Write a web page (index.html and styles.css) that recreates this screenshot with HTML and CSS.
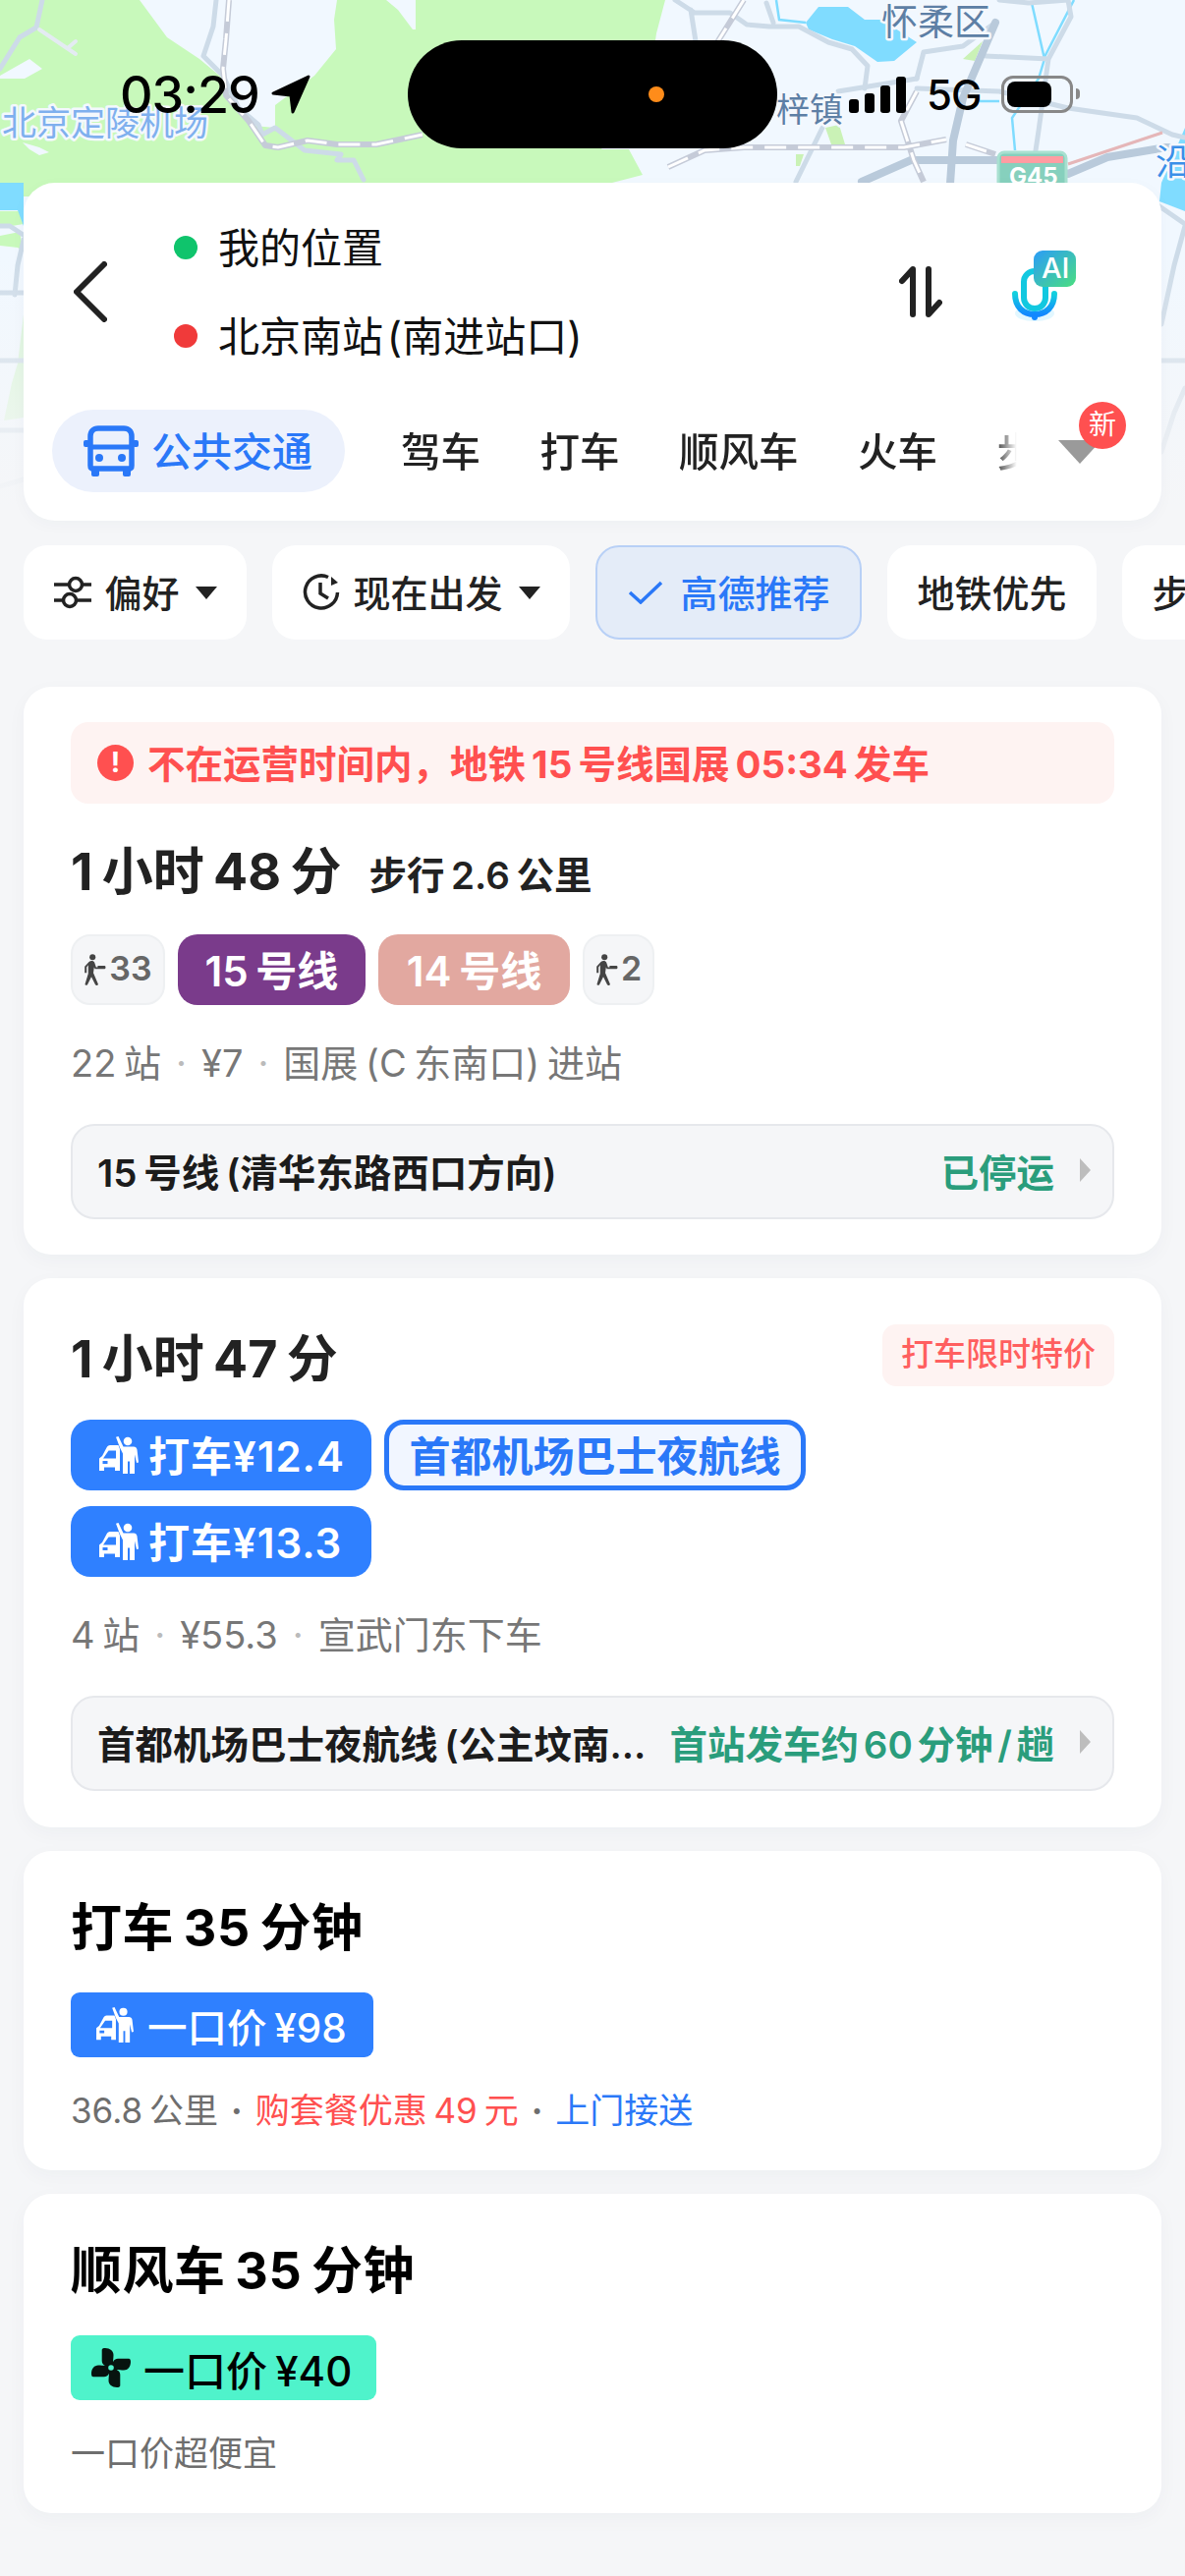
FILE: index.html
```html
<!DOCTYPE html>
<html lang="zh-CN">
<head>
  <meta charset="UTF-8" />
  <meta name="viewport" content="width=device-width, initial-scale=1.0"/>
  <title>路线规划</title>
  <link rel="stylesheet" href="styles.css">
</head>
<body>
  <svg class="icon-defs" width="0" height="0">
    <symbol id="taxi" viewBox="0 0 40 38">
      <circle cx="29" cy="5" r="4.300"/>
      <path d="M17 .8L19.500 0 24.500 10.500H35c2 0 3 1 3.500 3L40 26.500l-2 .5-2-8.500V38H31V25.500H29V38H24V17.500L21 11.500z"/>
      <path fill-rule="evenodd" d="M0 35V22.500L3 20 7.500 11.500C8.200 10 9.500 9 11 9H19.500L21 13V35H16V31.500H5V35zM4 22.500H17V14.500H9.500zM3.500 25v3h5v-3z"/>
    </symbol>
    <symbol id="walker" viewBox="0 0 30 40">
      <circle cx="11.500" cy="4" r="3.800"/>
      <path d="M7 10c2-2 6-2 7 1l2 6h2v-2h9c1.500 0 1.500 4 0 4H14.500l-1-2-1 7 6 14c.5 2-2.500 2.500-3.500 1L10 29 5 39c-1 1.500-3.500.5-3-1l4-13V14l-2 3v7H1.500V16z"/>
    </symbol>
    <symbol id="fan" viewBox="0 0 42 42">
      <path id="fan-blade" d="M21 21C16 20 11.700 18 11.700 14V3C11.700 1.500 13 1 15 1 20 1 23.500 4 23.500 8 23.500 12 22.500 15 23.500 18.500Z"/>
      <use href="#fan-blade" transform="rotate(90 21 21)"/>
      <use href="#fan-blade" transform="rotate(180 21 21)"/>
      <use href="#fan-blade" transform="rotate(270 21 21)"/>
      <circle cx="21" cy="21" r="2.800" fill="#4ff3cb"/>
    </symbol>
  </svg>

  <!-- Carte -->
  <div class="map">
    <svg viewBox="0 0 1206 560" width="1206" height="560">
      <rect width="1206" height="560" fill="#f1f8ff"/>
      <!-- verdure -->
      <path fill="#c8f9bb" d="M0 0H142L170 38 203 60 227 80 240 113 258 128 280 130 280 107 320 77 342 50 340 20 343 0H393L405 10 420 30 423 30 423 0H677L668 34 660 90 612 152H640L654 178 623 186V200H0Z"/>
      <path fill="#c8f9bb" d="M0 215H22L24 228 0 232ZM0 240L20 236 24 256 18 252 0 250Z"/>
      <path fill="#d8f6d6" d="M24 320V425L4 428 12 390 18 370Z"/>
      <path fill="#f1f8ff" d="M177 2l8-1 3 10-2 7-6-4zM0 77L30 60 43 70 25 80H0zM23 145L40 150 50 155 40 158 30 152z"/>
      <path fill="#caf2b6" d="M840 130l14-3 6 20h-14zM810 157h8l-4 12h-4zM980 60l20-18-8 20z"/>
      <!-- eau -->
      <path fill="#80dcff" d="M820 23L833 7H863L880 20H897L933 43 910 62 893 63 870 47 847 40 823 30Z"/>
      <path fill="#80dcff" d="M0 186H24V230L18 214H0ZM1206 130V215L1180 205 1182 186Z"/>
      <g fill="none" stroke="#7fdcff" stroke-width="2.500">
        <path d="M1050 3L1063 60 1057 80 1030 120 1033 153M790 0L793 20 820 23M1063 58L1093 0M997 103H1017"/>
      </g>
      <!-- routes claires -->
      <g fill="none" stroke="#cddbe8" stroke-width="5" stroke-linecap="round" stroke-linejoin="round">
        <path d="M43 0L37 28 20 38 0 70"/>
        <path stroke="#e4ebf2" stroke-width="4" d="M40 30L77 55M77 42L70 48"/>
        <path d="M220 0L217 27 207 57 227 77 243 110 263 127 267 137 280 130 293 140 310 153 347 157 343 163 360 163 370 183"/>
        <path d="M687 0L707 13H743L760 25 783 27H813L843 43 867 50 883 67 880 90M780 3L787 23M703 10L708 42"/>
        <path d="M933 80L940 53 980 47 1013 23M1003 57L1067 60 1090 17 1087 0M1017 0L1047 3 1087 0M1067 60L1057 133 1053 160"/>
        <path d="M853 93L933 80M933 90L1017 93 1087 110 1157 120 1193 137 1206 140M837 130L810 185"/>
        <path d="M0 230H10L25 240 18 270 15 300M0 298H24M0 367H24M0 438H24M0 495L24 488"/>
        <path d="M1182 330L1195 270 1206 230M1182 367H1206M1182 460L1195 420 1206 395M1180 210L1206 228"/>
      </g>
      <!-- voies rapides -->
      <g fill="none" stroke="#b9cadb" stroke-width="8" stroke-linecap="round" stroke-linejoin="round">
        <path d="M1013 23L980 100 970 143 967 187"/>
        <path d="M877 185L927 163H1017L1087 177 1127 160 1187 150 1206 150"/>
      </g>
      <!-- voies ferrees -->
      <g fill="none" stroke="#c5cbd8" stroke-width="6" stroke-linejoin="round">
        <path id="rail-a" d="M233 0L230 40 227 70 230 97 253 123 270 148 283 150 313 143 343 147H383L430 137"/>
        <path id="rail-b" d="M680 170L717 153 757 150H920L963 142M983 147L1013 157M757 0L730 43M933 93L917 123 930 163 940 185"/>
      </g>
      <g fill="none" stroke="#fff" stroke-width="3" stroke-dasharray="22 12">
        <use href="#rail-a"/>
        <use href="#rail-b"/>
      </g>
      <path fill="none" stroke="#e5b6b8" stroke-width="3" d="M1087 167L1183 135"/>
      <g class="map-label-halo">
        <text x="2" y="138" class="map-label-airport">北京定陵机场</text>
        <text x="790" y="124" class="map-label-town">梓镇</text>
        <text x="897" y="36" class="map-label-town map-label-district">怀柔区</text>
        <text x="1176" y="178" class="map-label-river">沿</text>
      </g>
      <rect x="1016" y="155" width="69" height="40" rx="6" fill="#86d0bd" stroke="#a8e0d0" stroke-width="3"/>
      <rect x="1019" y="159" width="63" height="7" fill="#ff9ca2"/>
      <text x="1027" y="188" class="map-label-road">G45</text>
    </svg>
  </div>

  <!-- Barre d'etat -->
  <div class="status-bar">
    <div class="status-time">
      <span>03:29</span>
      <svg width="40" height="40" viewBox="0 0 40 40"><path d="M38 2L2 19 20 21 22 38Z" fill="#000" stroke="#000" stroke-width="3" stroke-linejoin="round"/></svg>
    </div>
    <div class="island"><span class="island-dot"></span></div>
    <div class="status-right">
      <svg width="58" height="37" viewBox="0 0 58 37">
        <rect x="0" y="23" width="10" height="14" rx="3"/>
        <rect x="16" y="17" width="10" height="20" rx="3"/>
        <rect x="32" y="9" width="10" height="28" rx="3"/>
        <rect x="48" y="0" width="10" height="37" rx="3"/>
      </svg>
      <span class="status-net">5G</span>
      <div class="battery"><span class="battery-fill"></span></div>
    </div>
  </div>

  <!-- Panneau itineraire -->
  <div class="panel">
    <div class="route-row">
      <svg class="back-icon" width="34" height="62" viewBox="0 0 34 62"><path d="M31 3L3 31 31 59"/></svg>
      <div class="route-places">
        <div class="place"><span class="place-dot green"></span>我的位置</div>
        <div class="place"><span class="place-dot red"></span>北京南站 (南进站口)</div>
      </div>
      <svg class="swap-icon" width="44" height="52" viewBox="0 0 44 52">
        <path d="M14 49V3L3 15M30 3V49L41 37"/>
      </svg>
      <div class="mic">
        <svg width="66" height="76" viewBox="0 0 66 76">
          <defs>
            <linearGradient id="micBlue" x1="0" y1="0" x2="0" y2="1"><stop offset="0" stop-color="#12d0de"/><stop offset="1" stop-color="#1388ff"/></linearGradient>
            <linearGradient id="aiBadge" x1="0" y1="0" x2="1" y2="1"><stop offset="0" stop-color="#2a9cf8"/><stop offset="1" stop-color="#4ade80"/></linearGradient>
          </defs>
          <ellipse cx="24" cy="64" rx="20" ry="8" fill="#bfeeff" opacity=".45"/>
          <rect x="13" y="21" width="22" height="38" rx="11" fill="none" stroke="#12c8e0" stroke-width="6"/>
          <path d="M4 44c0 14 9 21 20 21s20-7 20-21" fill="none" stroke="url(#micBlue)" stroke-width="6" stroke-linecap="round"/>
          <rect x="21" y="64" width="6" height="7" rx="3" fill="#1388ff"/>
          <rect x="23" y="0" width="43" height="37" rx="9" fill="url(#aiBadge)"/>
          <text x="31" y="28" class="mic-ai">AI</text>
        </svg>
      </div>
    </div>
    <div class="mode-row">
      <div class="mode-active">
        <svg width="56" height="52" viewBox="0 0 56 52" fill="none">
          <path d="M7 24V11c0-5 3-8 8-8h26c5 0 8 3 8 8v30c0 2-1 3-3 3H10c-2 0-3-1-3-3z" stroke="#2a78f8" stroke-width="5.500"/>
          <path d="M7 22H49" stroke="#2a78f8" stroke-width="5"/>
          <rect x="0" y="15" width="6" height="7" rx="2" fill="#2a78f8"/><rect x="50" y="15" width="6" height="7" rx="2" fill="#2a78f8"/>
          <circle cx="16" cy="33" r="4" fill="#2a78f8"/><circle cx="39" cy="33" r="4" fill="#2a78f8"/>
          <rect x="8" y="44" width="8" height="8" rx="2" fill="#2a78f8"/><rect x="40" y="44" width="8" height="8" rx="2" fill="#2a78f8"/>
        </svg>
        <span class="mode-active-label">公共交通</span>
      </div>
      <div class="mode-list">
        <span>驾车</span><span>打车</span><span>顺风车</span><span>火车</span><span>步行</span>
      </div>
      <div class="mode-more">
        <span class="mode-triangle"></span>
        <span class="mode-new">新</span>
      </div>
    </div>
  </div>

  <!-- Filtres -->
  <div class="chips">
    <div class="chip">
      <svg width="38" height="34" viewBox="0 0 38 34" fill="none" stroke="#222" stroke-width="3.500">
        <path d="M0 9H15M29 9H38M0 25H9M23 25H38"/><circle cx="22" cy="9" r="6.500"/><circle cx="16" cy="25" r="6.500"/>
      </svg>
      <span class="chip-label">偏好</span><span class="caret"></span>
    </div>
    <div class="chip">
      <svg width="38" height="38" viewBox="0 0 38 38" fill="none" stroke="#222" stroke-width="3.500">
        <path d="M26 3.500A16.500 16.500 0 1 0 35.500 19M18 9V20L26 25"/><path d="M29 3l7 6-7 3z" fill="#222" stroke="none"/>
      </svg>
      <span class="chip-label">现在出发</span><span class="caret"></span>
    </div>
    <div class="chip chip-active">
      <svg width="36" height="24" viewBox="0 0 36 24" fill="none" stroke="#2a78f8" stroke-width="3.500"><path d="M2 12L13 22 34 2"/></svg>
      <span class="chip-label">高德推荐</span>
    </div>
    <div class="chip"><span class="chip-label">地铁优先</span></div>
    <div class="chip"><span class="chip-label">步行少</span></div>
  </div>

  <!-- Resultats -->
  <div class="results">
    <div class="card card-first">
      <div class="alert">
        <span class="alert-icon">!</span>
        <span class="alert-text">不在运营时间内，地铁 15 号线国展 05:34 发车</span>
      </div>
      <div class="title-row">
        <span class="time-title">1 小时 48 分</span>
        <span class="walk-note">步行 2.6 公里</span>
      </div>
      <div class="seg-row">
        <div class="seg seg-walk seg-walk-long"><svg width="24" height="38" fill="#444"><use href="#walker"/></svg>33</div>
        <div class="seg line-15">15 号线</div>
        <div class="seg line-14">14 号线</div>
        <div class="seg seg-walk seg-walk-short"><svg width="24" height="38" fill="#444"><use href="#walker"/></svg>2</div>
      </div>
      <div class="meta">22 站<i class="sep">·</i>¥7<i class="sep">·</i>国展 (C 东南口) 进站</div>
      <div class="info-box">
        <span class="info-name">15 号线 (清华东路西口方向)</span>
        <span class="info-state">已停运</span>
        <span class="info-arrow"></span>
      </div>
    </div>

    <div class="card card-second">
      <div class="title-row title-row-split">
        <span class="time-title">1 小时 47 分</span>
        <span class="promo">打车限时特价</span>
      </div>
      <div class="seg-row">
        <div class="seg seg-taxi"><svg width="40" height="38" fill="#fff"><use href="#taxi"/></svg>打车¥12.4</div>
        <div class="seg seg-outline">首都机场巴士夜航线</div>
      </div>
      <div class="seg-row seg-row-next">
        <div class="seg seg-taxi"><svg width="40" height="38" fill="#fff"><use href="#taxi"/></svg>打车¥13.3</div>
      </div>
      <div class="meta">4 站<i class="sep">·</i>¥55.3<i class="sep">·</i>宣武门东下车</div>
      <div class="info-box">
        <span class="info-name">首都机场巴士夜航线 (公主坟南站方向)</span>
        <span class="info-state">首站发车约 60 分钟 / 趟</span>
        <span class="info-arrow"></span>
      </div>
    </div>

    <div class="card card-plain">
      <div class="plain-title">打车 35 分钟</div>
      <div class="price price-taxi"><svg width="38" height="36" fill="#fff"><use href="#taxi"/></svg>一口价 ¥98</div>
      <div class="plain-meta">36.8 公里<i class="plain-sep">·</i><span class="text-red">购套餐优惠 49 元</span><i class="plain-sep">·</i><span class="text-blue">上门接送</span></div>
    </div>

    <div class="card card-plain">
      <div class="plain-title">顺风车 35 分钟</div>
      <div class="price price-ride">
        <svg class="fan-icon" width="42" height="42" fill="#07130f"><use href="#fan"/></svg>
        一口价 ¥40
      </div>
      <div class="plain-meta">一口价超便宜</div>
    </div>
  </div>
</body>
</html>
```

FILE: styles.css
```css
* {
  margin: 0;
  padding: 0;
  box-sizing: border-box;
  font-family: Inter, "Noto Sans CJK SC", sans-serif;
}

body {
  position: relative;
  width: 1206px;
  height: 2622px;
  background-color: #f5f6f8;
  overflow: hidden;
  color: #222;
  word-spacing: -3px;
}

.icon-defs {
  position: absolute;
}

/* Carte */
.map {
  position: absolute;
  top: 0;
  left: 0;
  width: 1206px;
  height: 560px;
}

.map::after {
  content: "";
  position: absolute;
  left: 0;
  right: 0;
  bottom: 0;
  height: 300px;
  background: linear-gradient(to bottom, rgba(245, 246, 248, 0), #f5f6f8 85%);
}

.map-label-halo text {
  paint-order: stroke;
  stroke: #f4f8fd;
  stroke-width: 5px;
  stroke-linejoin: round;
  font-family: "Noto Sans CJK SC", sans-serif;
}

.map-label-airport {
  font-size: 35px;
  fill: #7fb0ee;
}

.map-label-town {
  font-size: 34px;
  fill: #5d7fa5;
}

.map-label-district {
  font-size: 37px;
}

.map-label-road {
  font-size: 24px;
  font-weight: 700;
  fill: #fff;
}

.map-label-river {
  font-size: 36px;
  fill: #3a8fe8;
}

/* Barre d'etat */
.status-bar {
  position: absolute;
  top: 41px;
  left: 0;
  width: 1206px;
  height: 110px;
  display: flex;
  align-items: center;
  padding-left: 122px;
}

.status-time {
  width: 293px;
  display: flex;
  align-items: center;
  gap: 12px;
  font-size: 52px;
  font-weight: 500;
  color: #000;
  letter-spacing: -1px;
}

.island {
  width: 376px;
  height: 110px;
  border-radius: 55px;
  background-color: #000;
  position: relative;
}

.island-dot {
  position: absolute;
  left: 245px;
  top: 47px;
  width: 16px;
  height: 16px;
  border-radius: 50%;
  background-color: #ff8c1a;
}

.status-right {
  margin-left: 73px;
  display: flex;
  align-items: center;
  gap: 21px;
  font-size: 42px;
  font-weight: 500;
  color: #000;
}

.status-net {
  letter-spacing: -1px;
}

.battery {
  width: 73px;
  height: 38px;
  border: 3px solid #888;
  border-radius: 12px;
  padding: 3px;
  position: relative;
}

.battery::after {
  content: "";
  position: absolute;
  right: -10px;
  top: 10px;
  width: 4px;
  height: 11px;
  border-radius: 0 5px 5px 0;
  background-color: #888;
}

.battery-fill {
  display: block;
  width: 45px;
  height: 100%;
  background-color: #000;
  border-radius: 8px;
}

/* Panneau */
.panel {
  position: relative;
  margin: 186px 24px 0;
  height: 344px;
  padding: 21px 0 29px;
  background-color: #fff;
  border-radius: 32px;
  box-shadow: 0 4px 16px rgba(30, 50, 80, 0.03);
}

.route-row {
  height: 180px;
  display: flex;
  align-items: center;
  padding-left: 51px;
}

.back-icon {
  fill: none;
  stroke: #222;
  stroke-width: 6px;
  stroke-linecap: round;
  stroke-linejoin: round;
}

.route-places {
  flex: 1;
  margin-left: 92px;
}

.place {
  height: 90px;
  padding-bottom: 5px;
  display: flex;
  align-items: center;
  font-size: 42px;
  color: #111;
  word-spacing: -8px;
}

.place-dot {
  width: 24px;
  height: 24px;
  border-radius: 50%;
  margin-right: 21px;
  margin-left: -24px;
  margin-top: 5px;
}

.place-dot.green {
  background-color: #0fc46c;
}

.place-dot.red {
  background-color: #f03a3a;
}

.swap-icon {
  margin-right: 70px;
  fill: none;
  stroke: #222;
  stroke-width: 6px;
  stroke-linecap: round;
  stroke-linejoin: round;
}

.mic {
  margin-right: 87px;
  height: 76px;
  margin-top: -8px;
}

.mic-ai {
  font-size: 29px;
  font-weight: 500;
  fill: #fff;
}

.mode-row {
  margin-top: 30px;
  height: 84px;
  display: flex;
  align-items: center;
  padding-left: 29px;
  position: relative;
}

.mode-active {
  width: 298px;
  height: 84px;
  border-radius: 42px;
  background-color: #ecf1fc;
  color: #2a78f8;
  display: flex;
  align-items: center;
  gap: 13px;
  padding-left: 32px;
  font-size: 41px;
  font-weight: 500;
  flex-shrink: 0;
}

.mode-active-label {
  padding-bottom: 4px;
}

.mode-list {
  width: 685px;
  margin-left: 57px;
  padding-bottom: 4px;
  display: flex;
  gap: 60.500px;
  font-size: 40.500px;
  font-weight: 500;
  white-space: nowrap;
  overflow: hidden;
  -webkit-mask-image: linear-gradient(to right, #000 88%, transparent 91.500%);
  mask-image: linear-gradient(to right, #000 88%, transparent 91.500%);
}

.mode-more {
  position: absolute;
  left: 1053px;
  top: 31px;
  width: 45px;
  height: 24px;
}

.mode-triangle {
  position: absolute;
  left: 0;
  top: 0;
  border-left: 22px solid transparent;
  border-right: 22px solid transparent;
  border-top: 24px solid #9a9a9a;
}

.mode-new {
  position: absolute;
  left: 21px;
  top: -39px;
  width: 48px;
  height: 48px;
  border-radius: 50%;
  background-color: #ff5050;
  color: #fff;
  font-size: 28px;
  text-align: center;
  line-height: 46px;
}

/* Filtres */
.chips {
  position: relative;
  margin-top: 25px;
  padding-left: 24px;
  height: 96px;
  display: flex;
  gap: 26px;
  overflow: hidden;
}

.chip {
  height: 96px;
  border-radius: 24px;
  background-color: #fff;
  padding: 0 30.500px;
  display: flex;
  align-items: center;
  gap: 14px;
  font-size: 38px;
  font-weight: 500;
  white-space: nowrap;
  flex-shrink: 0;
}

.chip-label {
  padding-bottom: 3px;
}

.chip-active {
  background-color: #e4ecf8;
  border: 2px solid #b8d0f6;
  color: #2a78f8;
  padding: 0 30.500px;
  gap: 18px;
}

.caret {
  margin-left: 2px;
  border-left: 11px solid transparent;
  border-right: 11px solid transparent;
  border-top: 13px solid #222;
}

/* Cartes */
.results {
  margin: 48px 24px 0;
  display: flex;
  flex-direction: column;
  gap: 24px;
}

.card {
  background-color: #fff;
  border-radius: 28px;
  padding: 0 48px;
  box-shadow: 0 6px 20px rgba(30, 50, 80, 0.035);
}

.card-first {
  padding-top: 36px;
  padding-bottom: 36px;
}

.card-second {
  padding-top: 47px;
  padding-bottom: 37px;
}

.card-plain {
  padding-top: 46px;
  padding-bottom: 36px;
}

.alert {
  height: 83px;
  border-radius: 18px;
  background-color: #fef3f2;
  color: #ff5050;
  display: flex;
  align-items: center;
  gap: 14px;
  padding-left: 27px;
  font-size: 38.500px;
  font-weight: 700;
  white-space: nowrap;
}

.alert-text {
  padding-bottom: 3px;
}

.alert-icon {
  width: 37px;
  height: 37px;
  border-radius: 50%;
  background-color: #ff5050;
  color: #fff;
  font-size: 28px;
  line-height: 37px;
  text-align: center;
}

.title-row {
  margin-top: 35px;
  height: 66px;
  padding-bottom: 5px;
  display: flex;
  align-items: center;
  gap: 28px;
}

.title-row-split {
  margin-top: 0;
  height: 63px;
  padding-bottom: 0;
  justify-content: space-between;
}

.time-title {
  font-size: 52px;
  font-weight: 700;
  color: #222;
}

.walk-note {
  font-size: 38.500px;
  font-weight: 600;
  margin-top: 8px;
}

.promo {
  width: 236px;
  height: 63px;
  border-radius: 14px;
  background-color: #fef3f2;
  color: #ff5f5f;
  font-size: 33px;
  font-weight: 500;
  text-align: center;
  line-height: 60px;
}

.seg-row {
  margin-top: 32px;
  display: flex;
  gap: 13px;
}

.card-second .seg-row {
  margin-top: 34px;
}

.card-second .seg-row-next {
  margin-top: 16px;
}

.seg {
  height: 72px;
  border-radius: 20px;
  padding-bottom: 3px;
  display: flex;
  align-items: center;
  justify-content: center;
  font-size: 42px;
  font-weight: 600;
  white-space: nowrap;
}

.seg svg {
  margin-top: 3px;
}

.seg-walk {
  gap: 2px;
  background-color: #f5f6f8;
  border: 2px solid #eef0f2;
  color: #666;
  font-size: 34px;
}

.seg-walk-long {
  width: 96px;
}

.seg-walk-short {
  width: 73px;
}

.line-15 {
  width: 191px;
  background-color: #7a3b8b;
  color: #fff;
}

.line-14 {
  width: 195px;
  background-color: #e2a8a0;
  color: #fff;
}

.seg-taxi {
  width: 306px;
  gap: 10px;
  justify-content: flex-start;
  padding-left: 29px;
  background-color: #2f80ff;
  color: #fff;
  font-size: 42px;
  letter-spacing: 1px;
}

.seg-outline {
  width: 429px;
  background-color: #f1f6ff;
  border: 5px solid #2a78f8;
  color: #2a78f8;
}

.meta {
  margin-top: 35px;
  height: 51px;
  line-height: 49px;
  font-size: 38px;
  color: #777;
  white-space: nowrap;
}

.sep {
  font-style: normal;
  color: #bbb;
  margin: 0 15px;
}

.info-box {
  margin-top: 35px;
  height: 97px;
  border-radius: 24px;
  background-color: #f5f6f8;
  border: 2px solid #e6e8ec;
  display: flex;
  align-items: center;
  padding: 0 22px 3px 25px;
  font-size: 38.500px;
  font-weight: 600;
  white-space: nowrap;
}

.info-name {
  flex: 1;
  min-width: 0;
  overflow: hidden;
  text-overflow: ellipsis;
  color: #1c1c1c;
}

.info-state {
  margin-left: 16px;
  color: #2a9d7c;
  flex-shrink: 0;
  word-spacing: -5px;
}

.info-arrow {
  margin-left: 26px;
  flex-shrink: 0;
  border-top: 12px solid transparent;
  border-bottom: 12px solid transparent;
  border-left: 11px solid #bdbdbd;
}

.plain-title {
  height: 66px;
  line-height: 66px;
  font-size: 52px;
  font-weight: 700;
  color: #000;
  letter-spacing: 0.5px;
  word-spacing: -3px;
}

.price {
  margin-top: 32px;
  width: 308px;
  height: 66px;
  border-radius: 9px;
  display: flex;
  align-items: center;
  gap: 14px;
  padding-left: 26px;
  font-size: 40.500px;
  font-weight: 500;
  white-space: nowrap;
}

.price-taxi {
  background-color: #2f80ff;
  color: #fff;
}

.price-ride {
  width: 311px;
  padding-left: 20px;
  background-color: #4ff3cb;
  color: #000;
  font-size: 42px;
  gap: 12px;
}

.plain-meta {
  margin-top: 29px;
  height: 50px;
  line-height: 50px;
  font-size: 35px;
  color: #6e6e6e;
  white-space: nowrap;
}

.plain-sep {
  font-style: normal;
  font-weight: 700;
  margin: 0 13px;
}

.text-red {
  color: #ff5050;
}

.text-blue {
  color: #2a78f8;
}
```
